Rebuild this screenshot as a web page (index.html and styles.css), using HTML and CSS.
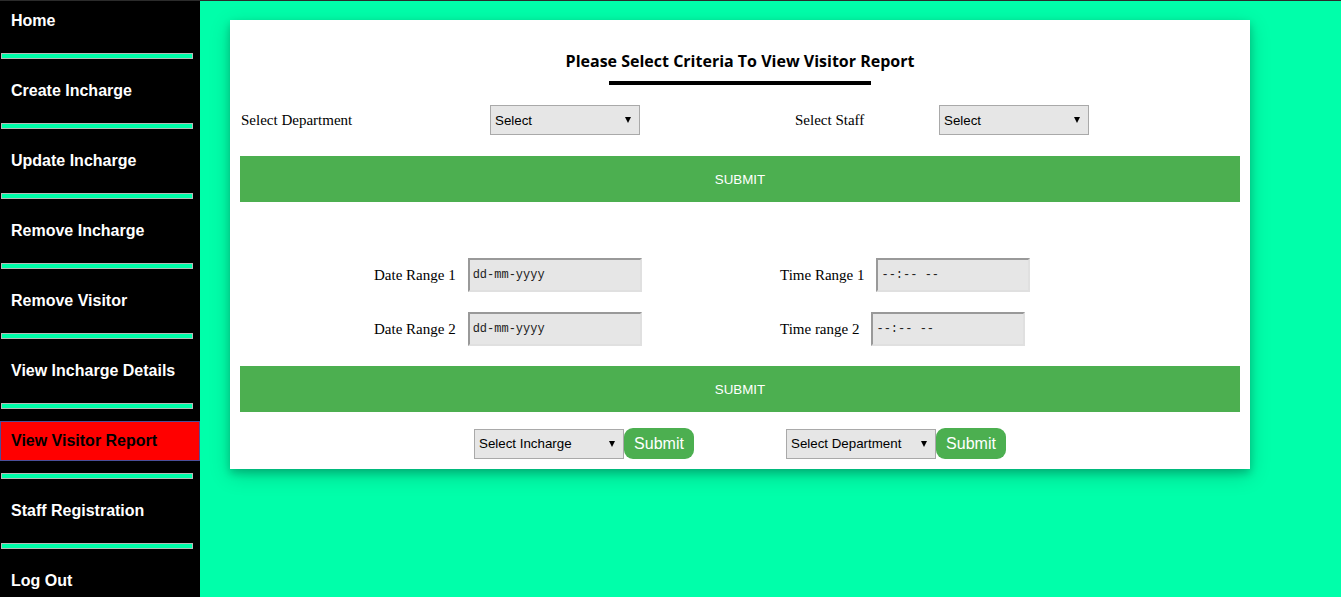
FILE: index.html
```html
<!DOCTYPE html>
<html lang="en">
<head>
<meta charset="utf-8">
<title>View Visitor Report</title>
<link rel="stylesheet" href="styles.css">
</head>
<body>
<div class="page">
  <nav class="sidebar">
    <a class="nav-link" href="#">Home</a>
    <hr class="sep">
    <a class="nav-link" href="#">Create Incharge</a>
    <hr class="sep">
    <a class="nav-link" href="#">Update Incharge</a>
    <hr class="sep">
    <a class="nav-link" href="#">Remove Incharge</a>
    <hr class="sep">
    <a class="nav-link" href="#">Remove Visitor</a>
    <hr class="sep">
    <a class="nav-link" href="#">View Incharge Details</a>
    <hr class="sep">
    <a class="nav-link active" href="#">View Visitor Report</a>
    <hr class="sep">
    <a class="nav-link" href="#">Staff Registration</a>
    <hr class="sep">
    <a class="nav-link" href="#">Log Out</a>
  </nav>
  <main class="main">
    <section class="card">
      <h2 class="title">Please Select Criteria To View Visitor Report</h2>
      <div class="title-bar"></div>

      <div class="row-select">
        <span class="label">Select Department</span>
        <span class="sel"><select><option>Select</option></select></span>
        <span class="label">Select Staff</span>
        <span class="sel"><select><option>Select</option></select></span>
      </div>

      <button class="wide-btn" type="button">SUBMIT</button>

      <div class="range-grid">
        <div class="range-cell">
          <span class="label">Date Range 1</span>
          <input class="field date" type="text" placeholder="dd-mm-yyyy">
        </div>
        <div class="range-cell">
          <span class="label">Time Range 1</span>
          <input class="field time" type="text" placeholder="--:-- --">
        </div>
        <div class="range-cell">
          <span class="label">Date Range 2</span>
          <input class="field date" type="text" placeholder="dd-mm-yyyy">
        </div>
        <div class="range-cell">
          <span class="label">Time range 2</span>
          <input class="field time" type="text" placeholder="--:-- --">
        </div>
      </div>

      <button class="wide-btn second" type="button">SUBMIT</button>

      <div class="row-bottom">
        <div class="group">
          <span class="sel"><select><option>Select Incharge</option></select></span>
          <button class="small-btn" type="button">Submit</button>
        </div>
        <div class="group">
          <span class="sel"><select><option>Select Department</option></select></span>
          <button class="small-btn" type="button">Submit</button>
        </div>
      </div>
    </section>
  </main>
</div>
</body>
</html>
```

FILE: styles.css
```css
html, body {
  margin: 0;
  padding: 0;
  height: 100%;
}

body {
  background: #00ffaa;
  font-family: "Liberation Serif", serif;
  overflow: hidden;
}

.page {
  display: flex;
  height: 100%;
  box-sizing: border-box;
  border-top: 1px solid #2b2b2b;
}

/* Sidebar */
.sidebar {
  width: 200px;
  flex: none;
  background: #000;
  display: flex;
  flex-direction: column;
  overflow: hidden;
}

.nav-link {
  display: flex;
  align-items: center;
  flex: none;
  height: 40px;
  box-sizing: border-box;
  padding-left: 10px;
  border: 1px solid transparent;
  color: #fff;
  text-decoration: none;
  font-family: "Liberation Sans", Arial, sans-serif;
  font-weight: bold;
  font-size: 16px;
}

.nav-link.active {
  background: #ff0000;
  color: #000;
  border-color: #4b4f9a;
}

.sep {
  flex: none;
  margin: 12px 7px 12px 1px;
  border: 1px solid #b8b8b8;
  box-sizing: border-box;
  height: 6px;
  background: #00ffaa;
}

/* Main */
.main {
  flex: 1;
  padding: 19px 30px 0;
}

.card {
  width: 1000px;
  padding: 10px;
  background: #fff;
  box-shadow: 0 4px 8px 0 rgba(0, 0, 0, 0.2), 0 6px 20px 0 rgba(0, 0, 0, 0.19);
  display: flex;
  flex-direction: column;
}

.title {
  margin: 20px 0 0;
  text-align: center;
  font-family: "Open Sans", "Noto Sans", sans-serif;
  font-weight: bold;
  font-size: 16px;
  line-height: 22px;
  color: #000;
}

.title-bar {
  align-self: center;
  width: 262px;
  height: 4px;
  background: #000;
  margin-top: 9px;
}

.label {
  font-family: "Liberation Serif", serif;
  font-size: 15px;
  color: #000;
}

.row-select {
  display: grid;
  grid-template-columns: 250px 305px 144px 1fr;
  align-items: center;
  margin-top: 20px;
  height: 30px;
}

.row-select .label:first-child {
  padding-left: 1px;
}

.sel {
  position: relative;
  display: inline-block;
  width: 150px;
  height: 30px;
}

.sel select {
  appearance: none;
  -webkit-appearance: none;
  width: 150px;
  height: 30px;
  box-sizing: border-box;
  border: 1px solid #a9a9a9;
  border-radius: 0;
  background: #e6e6e6;
  color: #000;
  font-family: "Liberation Sans", Arial, sans-serif;
  font-size: 13.33px;
  padding: 0 0 0 4px;
  margin: 0;
}

.sel::after {
  content: "";
  position: absolute;
  right: 9px;
  top: 12px;
  border-left: 3px solid transparent;
  border-right: 3px solid transparent;
  border-top: 6px solid #000;
  pointer-events: none;
}

.wide-btn {
  margin-top: 21px;
  height: 46px;
  width: 100%;
  border: none;
  background: #4caf50;
  color: #fff;
  font-family: "Liberation Sans", Arial, sans-serif;
  font-size: 13.33px;
  padding: 0;
}

.wide-btn.second {
  margin-top: 20px;
}

.range-grid {
  display: grid;
  grid-template-columns: 406px auto;
  row-gap: 20px;
  margin-top: 56px;
  padding-left: 134px;
}

.range-cell {
  display: flex;
  align-items: center;
  gap: 12px;
}

.field {
  box-sizing: border-box;
  height: 34px;
  margin: 0;
  background: #e6e6e6;
  border-style: solid;
  border-width: 2px;
  border-color: #999 #e0e0e0 #e0e0e0 #999;
  font-family: "Liberation Mono", "DejaVu Sans Mono", monospace;
  font-size: 12px;
  padding: 0 0 0 3px;
  color: #222;
}

.field::placeholder {
  color: #222;
  opacity: 1;
}

.field.date {
  width: 174px;
}

.field.time {
  width: 154px;
}

.row-bottom {
  display: flex;
  justify-content: center;
  gap: 92px;
  margin-top: 16px;
  height: 31px;
}

.group {
  display: flex;
  align-items: center;
}

.small-btn {
  width: 70px;
  height: 31px;
  border: none;
  border-radius: 9px;
  background: #4caf50;
  color: #fff;
  font-family: "Liberation Sans", Arial, sans-serif;
  font-size: 16px;
  padding: 0;
  margin: 0;
}
```
